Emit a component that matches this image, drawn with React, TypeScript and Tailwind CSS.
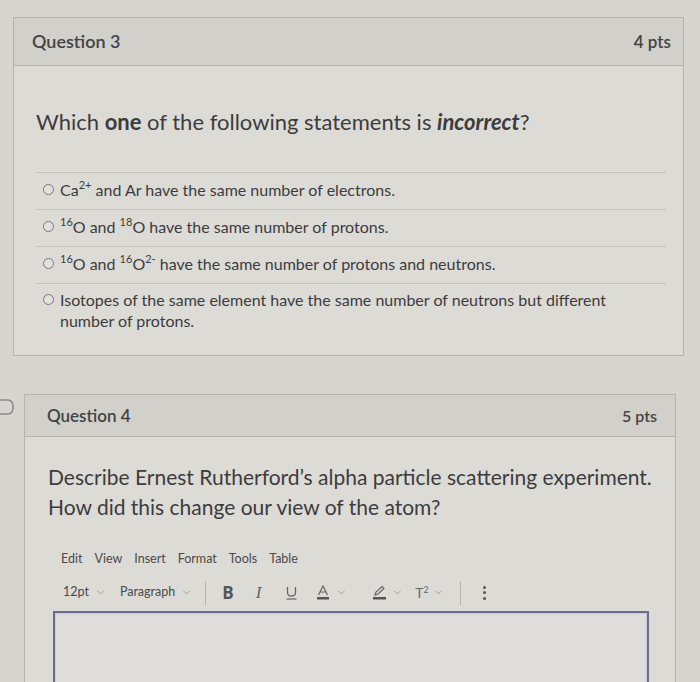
import { ChevronDown } from "lucide-react"

const font = { fontFamily: "Lato, 'Open Sans', sans-serif" }

function Radio() {
  return <span className="inline-block h-[11px] w-[11px] shrink-0 rounded-full border border-[#77777a] bg-[#e2e1dc]" />
}

function Chev({ className = "" }: { className?: string }) {
  return <ChevronDown className={`h-[11px] w-[11px] text-[#8a8a8a] ${className}`} strokeWidth={1.6} />
}

function Sup({ children }: { children: React.ReactNode }) {
  return <span className="relative -top-[7px] text-[11px] leading-none">{children}</span>
}

const answers = [
  <>Ca<Sup>2+</Sup> and Ar have the same number of electrons.</>,
  <><Sup>16</Sup>O and <Sup>18</Sup>O have the same number of protons.</>,
  <><Sup>16</Sup>O and <Sup>16</Sup>O<Sup>2-</Sup> have the same number of protons and neutrons.</>,
  <>Isotopes of the same element have the same number of neutrons but different number of protons.</>,
]

export default function App() {
  return (
    <div className="relative h-[682px] w-[700px] overflow-hidden bg-[#d6d5d0] text-[#3c3c3f]" style={font}>
      {/* Question 3 */}
      <div className="ml-[13px] mt-[17px] w-[671px] border border-[#b5b4af]">
        <div className="flex h-[48px] items-center justify-between border-b border-[#b5b4af] bg-[#d1d0cb] pl-[18px] pr-[12px]">
          <span className="text-[18px] font-semibold text-[#434346]">Question 3</span>
          <span className="text-[17px] font-semibold text-[#434346]">4 pts</span>
        </div>
        <div className="bg-[#dcdbd6] pb-[20px] pl-[22px] pr-[18px] pt-[41px]">
          <p className="text-[22px] leading-[30px]">
            Which <b>one</b> of the following statements is <b><i>incorrect</i></b>?
          </p>
          <div className="mt-[35px] w-[630px]">
            {answers.map((a, i) => (
              <div
                key={i}
                className={`flex gap-[6px] border-t border-[#c3c2bd] pl-[7px] text-[16px] leading-[21px] ${i === 3 ? "items-start pb-[4px] pt-[5px]" : "h-[37px] items-center pb-[4px]"}`}
              >
                <span className={`flex ${i === 3 ? "h-[21px] items-center" : ""}`}>
                  <Radio />
                </span>
                <span className="w-[580px]">{a}</span>
              </div>
            ))}
          </div>
        </div>
      </div>

      {/* bookmark flag */}
      <svg className="absolute left-[-6px] top-[398px]" width="22" height="18" viewBox="0 0 22 18">
        <path d="M1 2 H14 Q19 2 19 9 Q19 16 14 16 H1" fill="none" stroke="#8b8b8b" strokeWidth="1.6" />
      </svg>

      {/* Question 4 */}
      <div className="ml-[24px] mt-[38px] w-[652px] border border-[#b5b4af]">
        <div className="flex h-[42px] items-center justify-between border-b border-[#b5b4af] bg-[#d1d0cb] pl-[22px] pr-[18px]">
          <span className="text-[17px] font-semibold text-[#434346]">Question 4</span>
          <span className="text-[16px] font-semibold text-[#434346]">5 pts</span>
        </div>
        <div className="h-[260px] bg-[#dcdbd6] pl-[23px] pt-[25px]">
          <p className="text-[21px] leading-[30px]">
            Describe Ernest Rutherford’s alpha particle scattering experiment.
            <br />
            How did this change our view of the atom?
          </p>
          <div className="ml-[13px] mt-[28px] flex gap-[12px] text-[12.5px] text-[#4a4a4d]">
            <span>Edit</span>
            <span>View</span>
            <span>Insert</span>
            <span>Format</span>
            <span>Tools</span>
            <span>Table</span>
          </div>
          <div className="ml-[15px] mt-[11px] flex h-[26px] items-center text-[12.5px] text-[#4a4a4d]">
            <span>12pt</span>
            <Chev className="ml-[6px]" />
            <span className="ml-[14px]">Paragraph</span>
            <Chev className="ml-[6px]" />
            <span className="ml-[13px] h-[24px] w-px bg-[#b3b2ad]" />
            <span className="ml-[16px] text-[17px] font-bold leading-none text-[#555]" style={{ fontFamily: "'Open Sans', sans-serif" }}>B</span>
            <span className="ml-[22px] text-[17px] italic leading-none text-[#666]" style={{ fontFamily: "'Liberation Serif', serif" }}>I</span>
            <span className="ml-[25px] flex flex-col items-center leading-none">
              <svg width="11" height="14" viewBox="0 0 11 14"><path d="M1.5 1 V6.5 Q1.5 10 5.5 10 Q9.5 10 9.5 6.5 V1" fill="none" stroke="#666" strokeWidth="1.3" /><path d="M0.5 13 H10.5" stroke="#666" strokeWidth="1.2" /></svg>
            </span>
            <span className="ml-[20px]">
              <svg width="12" height="15" viewBox="0 0 12 15"><path d="M1.5 10 L6 1 L10.5 10 M3.2 7 H8.8" fill="none" stroke="#666" strokeWidth="1.2" /><rect x="0" y="12" width="12" height="2.5" fill="#555" /></svg>
            </span>
            <Chev className="ml-[7px]" />
            <span className="ml-[26px]">
              <svg width="13" height="15" viewBox="0 0 13 15"><path d="M2 10 L3 7 L9 1.5 L11 3.5 L5 9 Z M2 10 L5 9" fill="none" stroke="#666" strokeWidth="1.2" /><rect x="0" y="12" width="13" height="2.5" fill="#555" /></svg>
            </span>
            <Chev className="ml-[6px]" />
            <span className="ml-[12px] text-[14px] leading-none text-[#666]">T<sup className="text-[9px]">2</sup></span>
            <Chev className="ml-[4px]" />
            <span className="ml-[16px] h-[24px] w-px bg-[#b3b2ad]" />
            <span className="ml-[22px] flex flex-col gap-[2.5px]">
              <span className="h-[3px] w-[3px] rounded-full bg-[#555]" />
              <span className="h-[3px] w-[3px] rounded-full bg-[#555]" />
              <span className="h-[3px] w-[3px] rounded-full bg-[#555]" />
            </span>
          </div>
          <div className="ml-[5px] mt-[5px] h-[120px] w-[596px] border-2 border-[#6c6c92] bg-[#dedddb] shadow-[inset_0_0_0_1px_#c9c9dc]" />
        </div>
      </div>
    </div>
  )
}
